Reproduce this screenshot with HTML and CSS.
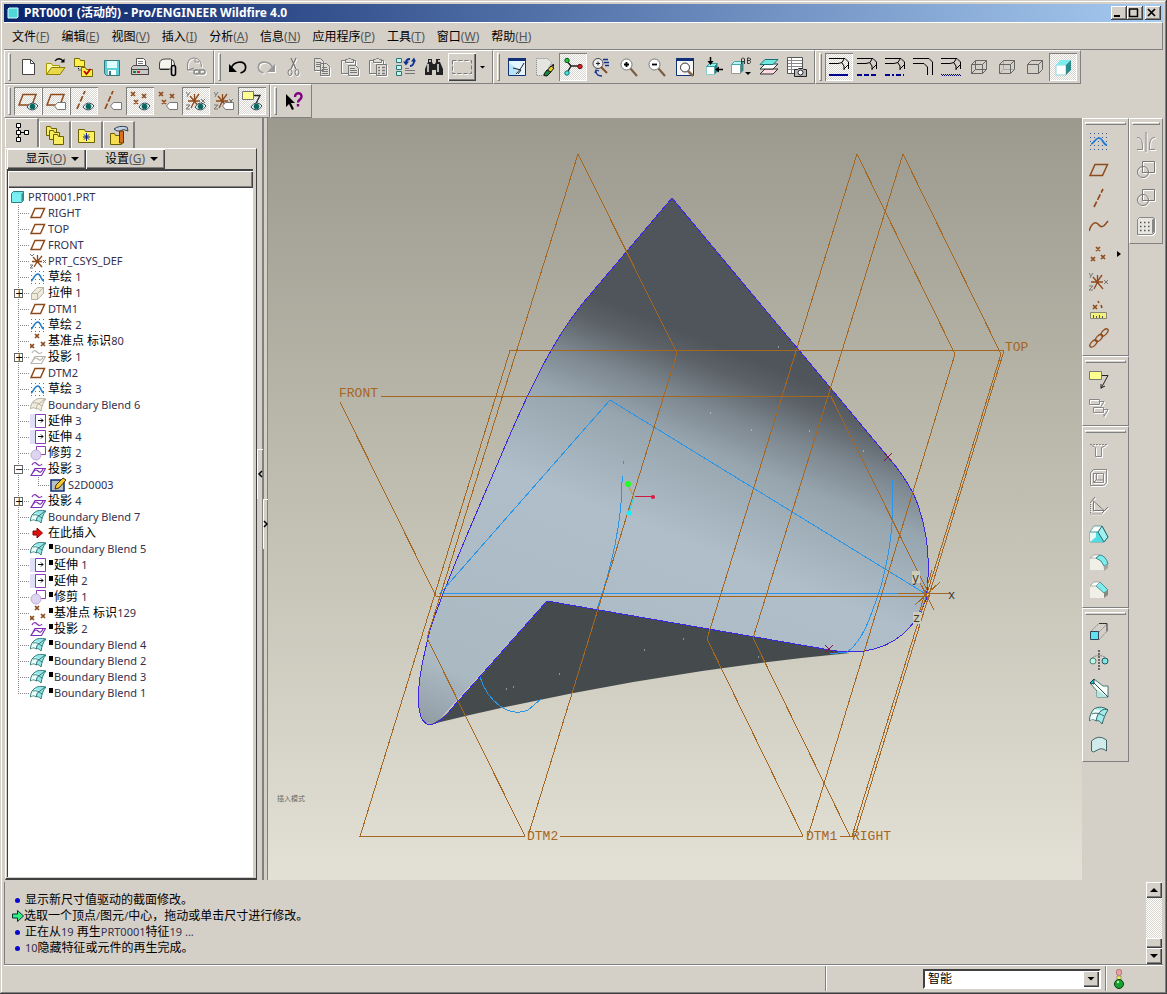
FILE: index.html
```html
<!DOCTYPE html>
<html lang="zh-CN">
<head>
<meta charset="utf-8">
<title>PRT0001 (活动的) - Pro/ENGINEER Wildfire 4.0</title>
<link rel="stylesheet" href="styles.css">
</head>
<body>
<svg class="sprite" aria-hidden="true">
  <!-- file -->
  <symbol id="new" viewBox="0 0 20 20"><path d="M4.500 2.500h8l4 4v11h-12z" fill="#fff" stroke="#444"/><path d="M12.500 2.500v4h4" fill="none" stroke="#444"/></symbol>
  <symbol id="open" viewBox="0 0 20 20"><path d="M.5 17.500v-11h5l1 2h7v3" fill="#fffaa8" stroke="#a89800"/><path d="M.5 17.500l5-7h13.500l-5 7z" fill="#e8d84a" stroke="#8c7c00"/><path d="M9 4c2-3 6-3 8 0" fill="none" stroke="#000" stroke-width="1.300"/><path d="M18.500 1.500v4h-4z"/></symbol>
  <symbol id="folders" viewBox="0 0 20 20"><path d="M.5 1.500h5l1 2h4v6h-10z" fill="#fff04a" stroke="#776b00"/><path d="M4.500 9v4h4" fill="none" stroke="#000" stroke-dasharray="1 1"/><path d="M7.500 10.500h4l1 2h6v7h-11z" fill="#fff04a" stroke="#776b00"/><path d="M10 14l2.500 3 4-5" fill="none" stroke="#c00000" stroke-width="1.800"/></symbol>
  <symbol id="save" viewBox="0 0 20 20"><path d="M2.500 3.500h15v15h-13l-2-2z" fill="#5cd0d4" stroke="#357a80"/><path d="M5 4h10v7H5z" fill="#dff"/><path d="M6 13h8v5H6z" fill="#fff"/><path d="M7 14h2v4H7z" fill="#357a80"/></symbol>
  <symbol id="print" viewBox="0 0 20 20"><path d="M6.500 10V1.500h7l2 2V10" fill="#fff" stroke="#555"/><path d="M8 4.500h5M8 6.500h5M8 8.500h5" stroke="#777"/><path d="M1.500 10.500l2-2h13l2 2v7h-17z" fill="#c8c8c8" stroke="#444"/><path d="M2 12.500h16M2 17.500h17" stroke="#444"/><path d="M3 14h3v2H3z" fill="#0a8a30"/><path d="M7 14h3v2H7z" fill="#d02020"/></symbol>
  <symbol id="mail" viewBox="0 0 20 20"><path d="M1.500 12V7q0-5 6-5h5q4 1 4 5v5z" fill="#f5f3ee" stroke="#444"/><path d="M13.500 3v6" stroke="#a02020"/><path d="M2 12.500h9" stroke="#222"/><rect x="13.500" y="8.500" width="4" height="10" rx="2" fill="#ddd" stroke="#000" stroke-width="1.600"/></symbol>
  <symbol id="link" viewBox="0 0 20 20"><path d="M11 13H1.500V8q0-7 7-7 7 1 7 9" fill="none" stroke="#888"/><path d="M9 2v3h4M2 13l6-2" fill="none" stroke="#888"/><rect x="8" y="13" width="6" height="4" rx="2" fill="none" stroke="#888" stroke-width="1.500"/><rect x="13" y="13" width="6" height="4" rx="2" fill="none" stroke="#888" stroke-width="1.500"/></symbol>
  <!-- edit -->
  <symbol id="undo" viewBox="0 0 20 20"><path d="M3 12C5 4 16 3 17.500 9c1 4-2 6-5 7" fill="none" stroke="#000" stroke-width="1.700"/><path d="M1 7v8h8z"/></symbol>
  <symbol id="redo" viewBox="0 0 20 20"><path d="M17 12C15 4 4 3 2.500 9c-1 4 2 6 5 7" fill="none" stroke="#999" stroke-width="1.700"/><path d="M19 7v8h-8z" fill="#999"/></symbol>
  <symbol id="cut" viewBox="0 0 20 20"><path d="M7 1l5 11M12 1L7 12" stroke="#777" stroke-width="1.300"/><ellipse cx="6" cy="15.500" rx="2" ry="3" fill="none" stroke="#777"/><ellipse cx="13" cy="15.500" rx="2" ry="3" fill="none" stroke="#777"/></symbol>
  <symbol id="copy" viewBox="0 0 20 20"><path d="M2.500 1.500h6l3 3v9h-9zM8.500 6.500h6l3 3v9h-9z" fill="#e0ddd6" stroke="#777"/><path d="M4 5.500h5M4 7.500h4M4 9.500h4M10 10.500h5M10 12.500h6M10 14.500h6M10 16.500h6" stroke="#777"/></symbol>
  <symbol id="paste" viewBox="0 0 20 20"><path d="M1.500 3.500h14v13h-14z" fill="none" stroke="#777"/><path d="M5.500 5.500v-3h2l1-1h2l1 1h2v3z" fill="#e0ddd6" stroke="#777"/><path d="M8.500 8.500h7l3 3v7h-10z" fill="#e0ddd6" stroke="#777"/><path d="M10 11.500h5M10 13.500h7M10 15.500h7" stroke="#777"/></symbol>
  <symbol id="pastesp" viewBox="0 0 20 20"><path d="M1.500 3.500h14v13h-14z" fill="none" stroke="#777"/><path d="M5.500 5.500v-3h2l1-1h2l1 1h2v3z" fill="#e0ddd6" stroke="#777"/><path d="M8.500 7.500h10v11h-10z" fill="#e0ddd6" stroke="#777"/><path d="M10 10.500h2M14 10.500h3M10 13.500h2M14 13.500h3M10 16.500h2M14 16.500h3" stroke="#777" stroke-width="1.500"/></symbol>
  <symbol id="regen" viewBox="0 0 20 20"><path d="M.5 1.500h5v4h-5zM.5 8.500h5v4h-5zM.5 14.500h5v4h-5z" fill="#c8f4f0" stroke="#287878"/><path d="M10 6c0-3 2-4 4-4M18 4c0 3-2 5-4 5" fill="none" stroke="#103090" stroke-width="2"/><path d="M7 4.500h6L10 8.500zM15 4.500h5l-2-4z" fill="#103090"/><path d="M9 13.500h10M9 16.500h10M9 11.500h4" stroke="#777"/></symbol>
  <symbol id="find" viewBox="0 0 20 20"><path d="M4 2h4v3l1 2h2l1-2V2h4v3l3 7v6h-7v-5H8v5H1v-6l3-7z" fill="#222"/><path d="M4 7v8M14 7v8M6 3v2M15 3v2" stroke="#e8e8e8" stroke-width="1.500"/></symbol>
  <symbol id="select" viewBox="0 0 20 20"><path d="M1.500 4.500h19v13h-19z" fill="none" stroke="#fff" stroke-dasharray="4 2"/><path d="M.5 3.500h19v13H.5z" fill="none" stroke="#777" stroke-dasharray="4 2"/></symbol>
  <!-- view -->
  <symbol id="repaint" viewBox="0 0 20 20"><path d="M1.500 1.500h17v17h-17z" fill="#e4f6ff" stroke="#103078"/><path d="M1 1h18v3H1z" fill="#103078"/><path d="M2 6l9 6-2 6H2z" fill="#b8e4fa"/><path d="M9 17c3-3 6-7 8-11M6 11l8 2-3 4" fill="none" stroke="#222"/></symbol>
  <symbol id="shadeoff" viewBox="0 0 20 20"><path d="M1.500 1.500h11l4 4-7 13h-8z" fill="#e4e4e0" stroke="#888" stroke-dasharray="1 1"/><path d="M12 14l4-5 3 2-4 5z" fill="#e8d820" stroke="#111"/><path d="M9 17l3-4 4 2-4 4-3-.5z" fill="#188838" stroke="#111"/><path d="M16 8l3-1v3z" fill="#111"/></symbol>
  <symbol id="spin" viewBox="0 0 20 20"><path d="M4 4l4 5M8 9h8M8 9l-4 7" stroke="#222" stroke-width="1.500"/><circle cx="4" cy="3.500" r="2.200" fill="#20c838" stroke="#085818"/><circle cx="17" cy="9.500" r="2.200" fill="#d82020" stroke="#601010"/><circle cx="4" cy="16" r="2.200" fill="#40e8e8" stroke="#107070"/></symbol>
  <symbol id="zoomspin" viewBox="0 0 20 20"><circle cx="7" cy="6.500" r="5" fill="#eee" stroke="#444"/><path d="M5 6.500h4M7 4.500v4" stroke="#222"/><path d="M10 10l6 6" stroke="#7a5030" stroke-width="2"/><path d="M12 2.500h5M13 5.500h5M14 8.500h4M5 14c0 4 2 5 6 5M4 16l1-3 3 1" fill="none" stroke="#103090" stroke-width="1.300"/></symbol>
  <symbol id="zoomin" viewBox="0 0 20 20"><path d="M11 11l7 8" stroke="#7a5a40" stroke-width="2"/><circle cx="7.500" cy="7.500" r="5.500" fill="#fff" stroke="#777"/><path d="M5 7.500h5M7.500 5v5" stroke="#000" stroke-width="1.800"/></symbol>
  <symbol id="zoomout" viewBox="0 0 20 20"><path d="M11 11l7 8" stroke="#7a5a40" stroke-width="2"/><circle cx="7.500" cy="7.500" r="5.500" fill="#fff" stroke="#777"/><path d="M5 7.500h5" stroke="#000" stroke-width="1.800"/></symbol>
  <symbol id="refit" viewBox="0 0 20 20"><path d="M1.500 1.500h17v17h-17z" fill="#f6f6f6" stroke="#103078"/><path d="M1 1h18v3H1z" fill="#103078"/><path d="M13 14l5 5" stroke="#8a6a50" stroke-width="2.500"/><circle cx="10" cy="10.500" r="4.500" fill="#fff" stroke="#333"/></symbol>
  <symbol id="orient" viewBox="0 0 20 20"><path d="M3.500 9.500h8v8h-8z" fill="#fff" stroke="#8cc"/><path d="M3.500 9.500l3-3h8l-3 3z" fill="#8ff0f0" stroke="#3a9a9a"/><path d="M11.500 9.500l3-3v8l-3 3z" fill="#288080"/><path d="M7.500 0v5M20 12.500h-5" stroke="#000" stroke-width="1.500"/><path d="M4.500 4h6l-3 4zM16 9.500v6l-4-3z"/></symbol>
  <symbol id="saved" viewBox="0 0 20 20"><path d="M.5 7.500h9v9h-9z" fill="#fff" stroke="#999"/><path d="M.5 7.500l3-3h9l-3 3z" fill="#baf4f4" stroke="#4aa"/><path d="M9.500 7.500l3-3v9l-3 3z" fill="#3a8a8a"/><path d="M10.500 7V2l1-1h1l1 1v5M10.500 4.500h3M16.500 1v5.500h2l1-1v-1l-1-1h-2 2l1-.5v-1l-1-1z" fill="none" stroke="#333"/><path d="M14 15h6l-3 3z"/></symbol>
  <symbol id="layers" viewBox="0 0 20 20"><path d="M1 17l5-5h13l-5 5z" fill="#ffd8e0" stroke="#333"/><path d="M1 12l5-5h13l-5 5z" fill="#fff" stroke="#333"/><path d="M1 7.500l5-5h13l-5 5z" fill="#70e8e0" stroke="#187070"/></symbol>
  <symbol id="viewmgr" viewBox="0 0 20 20"><path d="M.5 .500h15v16H.5z" fill="#fff" stroke="#555"/><path d="M1 3.500h14M1 6.500h14M1 9.500h14M1 12.500h14M4.500 1v15" stroke="#888"/><path d="M7.500 12.500h3l1-1h4l1 1h3v7h-12z" fill="#b8b8b8" stroke="#222"/><circle cx="13.500" cy="15.500" r="2.500" fill="#fff" stroke="#222"/></symbol>
  <!-- line display -->
  <symbol id="bend" viewBox="0 0 20 20"><path d="M0 1.500h16l3.500 3.500V12M0 6.500h9l4-1 2-3.500M13 6l2 3v4M15 12l4-4" fill="none" stroke="#000"/></symbol>
  <symbol id="d1" viewBox="0 0 20 20"><use href="#bend"/><path d="M0 18h19" stroke="#000090" stroke-width="2"/></symbol>
  <symbol id="d2" viewBox="0 0 20 20"><use href="#bend"/><path d="M0 18h19" stroke="#000090" stroke-width="2" stroke-dasharray="5 2"/></symbol>
  <symbol id="d3" viewBox="0 0 20 20"><use href="#bend"/><path d="M0 18h19" stroke="#000090" stroke-width="2" stroke-dasharray="5 2 2 2"/></symbol>
  <symbol id="d4" viewBox="0 0 20 20"><path d="M0 1.500h16l3.500 3.500V18M0 6.500h11l3.500 3.500V18" fill="none" stroke="#000"/></symbol>
  <symbol id="d5" viewBox="0 0 20 20"><use href="#bend"/><path d="M0 17.500h19" stroke="#000090" stroke-dasharray="1 1"/><path d="M1 18.500h19" stroke="#000090" stroke-dasharray="1 1"/></symbol>
  <symbol id="wire" viewBox="0 0 20 20"><path d="M2.500 7.500h11v9h-11zM6.500 3.500h11v9h-11zM2.500 7.500l4-4M13.500 7.500l4-4M2.500 16.500l4-4M13.500 16.500l4-4" fill="none" stroke="#666"/></symbol>
  <symbol id="hidden" viewBox="0 0 20 20"><path d="M6.500 3.500v9h11M2.500 16.500l4-4" fill="none" stroke="#aaa"/><path d="M2.500 7.500h11v9h-11zM2.500 7.500l4-4h11v9l-4 4M13.500 7.500l4-4" fill="none" stroke="#666"/></symbol>
  <symbol id="nohidden" viewBox="0 0 20 20"><path d="M2.500 7.500h11v9h-11zM2.500 7.500l4-4h11v9l-4 4M13.500 7.500l4-4" fill="none" stroke="#666"/></symbol>
  <symbol id="shade" viewBox="0 0 20 20"><path d="M3 8h10v10H3z" fill="#fff" stroke="#7cc" stroke-width=".8"/><path d="M3 8l4-5h11l-5 5z" fill="#7cecec"/><path d="M13 8l5-5v10l-5 5z" fill="#2a8c8c"/></symbol>
  <!-- datum display -->
  <symbol id="eye" viewBox="0 0 20 20"><path d="M9 16c3-5 8-5 11-1-3 5-8 5-11 1z" fill="#e8f4f0" stroke="#345"/><circle cx="14.500" cy="15.500" r="2.800" fill="#086860"/></symbol>
  <symbol id="tag" viewBox="0 0 20 20"><path d="M8.500 15l3-3.500h8v7h-8z" fill="#fff" stroke="#777"/></symbol>
  <symbol id="plane" viewBox="0 0 20 20"><path d="M1 15.500L6 4.500h12.500l-5 11z" fill="none" stroke="#8f4a1c" stroke-width="1.500"/></symbol>
  <symbol id="axis" viewBox="0 0 20 20"><path d="M5 19L14 1" stroke="#8f4a1c" stroke-width="1.700" stroke-dasharray="6 2"/></symbol>
  <symbol id="points" viewBox="0 0 20 20"><path d="M7 3l4 4M11 3L7 7M2 13l4 4M6 13l-4 4M12 11l4 4M16 11l-4 4" stroke="#8f4a1c" stroke-width="1.700"/></symbol>
  <symbol id="csys" viewBox="0 0 20 20"><path d="M2 10h12M8.500 3v7L5 17M4 5l10 12M13 3L8 10" fill="none" stroke="#8f4a1c" stroke-width="1.300"/><path d="M0 1l2 3 2-3M2 4L1 6M0 14h4l-4 4h4M15 8l4 4M19 8l-4 4" fill="none" stroke="#777"/></symbol>
  <symbol id="note" viewBox="0 0 20 20"><path d="M.5 1.500h12v8H.5z" fill="#ffff90" stroke="#777"/><path d="M13 5.500h6l-7 13M12 18v-4M12 18l4-2" fill="none" stroke="#222"/></symbol>
  <symbol id="t1" viewBox="0 0 20 20"><path d="M1 14L5 3.500h13l-4 10.500z" fill="none" stroke="#8f4a1c" stroke-width="1.500"/><use href="#eye"/></symbol>
  <symbol id="t2" viewBox="0 0 20 20"><path d="M1 14L5 3.500h13l-4 10.500z" fill="none" stroke="#8f4a1c" stroke-width="1.500"/><use href="#tag"/></symbol>
  <symbol id="t3" viewBox="0 0 20 20"><path d="M3 18L11 0" stroke="#8f4a1c" stroke-width="1.700" stroke-dasharray="6 2"/><use href="#eye"/></symbol>
  <symbol id="t4" viewBox="0 0 20 20"><path d="M3 18L11 0" stroke="#8f4a1c" stroke-width="1.700" stroke-dasharray="6 2"/><use href="#tag"/></symbol>
  <symbol id="cross3" viewBox="0 0 20 20"><path d="M1 1l4 4M5 1L1 5M12 3l4 4M16 3l-4 4M4 9l4 4M8 9l-4 4" stroke="#8f4a1c" stroke-width="1.700"/></symbol>
  <symbol id="t5" viewBox="0 0 20 20"><use href="#cross3"/><use href="#eye"/></symbol>
  <symbol id="t6" viewBox="0 0 20 20"><use href="#cross3"/><use href="#tag"/></symbol>
  <symbol id="t7" viewBox="0 0 20 20"><use href="#csys"/><use href="#eye"/></symbol>
  <symbol id="t8" viewBox="0 0 20 20"><use href="#csys"/><use href="#tag"/></symbol>
  <symbol id="t9" viewBox="0 0 20 20"><path d="M.5 .500h11v8H.5z" fill="#ffff90" stroke="#777"/><path d="M12 4.500h6l-4 8" fill="none" stroke="#222" stroke-width="1.300"/><use href="#eye"/></symbol>
  <symbol id="help" viewBox="0 0 20 20"><path d="M2 3v13l3-3 3 6 2-1-3-6h4z"/><path d="M11 6c0-5 7-5 6.500 0-.5 3-3.500 2.500-3.500 5.500M14 13v2.500" fill="none" stroke="#800080" stroke-width="2.400"/></symbol>
  <!-- feature bars -->
  <symbol id="sketch" viewBox="0 0 20 20"><path d="M1 1.500h18M1 5.500h18M1 9.500h18M1 13.500h18M1 17.500h18" stroke="#345a90" stroke-dasharray="1 3"/><path d="M2 12c3 0 4-6 8-6s4 7 8 7" fill="none" stroke="#1878d8" stroke-width="1.700"/></symbol>
  <symbol id="curve" viewBox="0 0 20 20"><path d="M0 15C3 6 7 5 10 9s6 0 9-4" fill="none" stroke="#8f4a1c" stroke-width="1.500"/></symbol>
  <symbol id="analysis" viewBox="0 0 20 20"><path d="M4 5l4 4M8 5L4 9M9 1l1 2M12 5l1 3" stroke="#8f4a1c" stroke-width="1.600"/><path d="M1.500 12.500h16v6h-16z" fill="#f4f080" stroke="#887"/><path d="M4.500 18v-3M7.500 18v-2M10.500 18v-3M13.500 18v-2" stroke="#554"/></symbol>
  <symbol id="chain" viewBox="0 0 20 20"><g fill="none" stroke="#8f4a1c" stroke-width="1.300"><ellipse cx="4.500" cy="15.500" rx="4.500" ry="2.300" transform="rotate(-45 4.500 15.500)"/><ellipse cx="10" cy="10" rx="4.500" ry="2.300" transform="rotate(-45 10 10)"/><ellipse cx="15.500" cy="4.500" rx="4.500" ry="2.300" transform="rotate(-45 15.500 4.500)"/></g></symbol>
  <symbol id="notes" viewBox="0 0 20 20"><path d="M.5 1.500h10v5H.5zM4.500 9.500h10v5h-10zM11 3.500h4l-3 5M15 11.500h4l-4 7v-3" fill="none" stroke="#888"/></symbol>
  <symbol id="hole" viewBox="0 0 20 20"><path d="M1 4.500h18" stroke="#888" stroke-dasharray="2 1"/><path d="M2.500 5.500l4 2v9h6v-9l4-2" fill="none" stroke="#888"/></symbol>
  <symbol id="shell" viewBox="0 0 20 20"><path d="M1.500 4.500l3-3h13v13l-3 3h-13zM4.500 5.500h10v9h-10zM7.500 5v7h7M4.500 14.500l3-3" fill="none" stroke="#888"/></symbol>
  <symbol id="rib" viewBox="0 0 20 20"><path d="M4.500 5v9.500H15zM1 7l5-6M13 17l6-6" fill="none" stroke="#777"/><path d="M1.500 8v10h12" fill="none" stroke="#777" stroke-dasharray="1 1"/></symbol>
  <symbol id="draft" viewBox="0 0 20 20"><path d="M1 8l4-6h8l6 11-4 5H1z" fill="#fff" stroke="#499" stroke-width=".8"/><path d="M1 8h6v7l-6 3z" fill="#e8f8f4"/><path d="M1 18l6-5V8h2l6 10z" fill="#50dce0"/><path d="M9 8l4-6 6 11-4 5z" fill="#a0f0f0" stroke="#266"/><path d="M1 8h8" stroke="#499"/></symbol>
  <symbol id="round" viewBox="0 0 20 20"><path d="M1 6h6q7 3 8 12H1z" fill="#f0f0e8"/><path d="M1 6l4-3h6L7 6z" fill="#fff" stroke="#888" stroke-width=".6"/><path d="M7 6l4-3q6 1 8 9l-4 2q-2-6-8-8z" fill="#80ecec" stroke="#288" stroke-width=".9"/><path d="M15 14l4-2v4l-4 3z" fill="#a8a49c"/></symbol>
  <symbol id="chamfer" viewBox="0 0 20 20"><path d="M1 6h6l8 7v5H1z" fill="#f0f0e8"/><path d="M7 6l4-4 8 8-4 3z" fill="#80ecec" stroke="#288" stroke-width=".8"/><path d="M1 6l4-4h6L7 6z" fill="#fff" stroke="#888" stroke-width=".6"/><path d="M15 13l4-3v5l-4 3z" fill="#8a8780"/></symbol>
  <symbol id="extrude" viewBox="0 0 20 20"><path d="M1 10l9-8.500M10 18l8-9M10 10l8-8" stroke="#888" stroke-dasharray="2 1"/><path d="M1.500 9.500h8v8h-8z" fill="#60e0f0" stroke="#345"/><path d="M10 1.500h8v8" fill="none" stroke="#333"/></symbol>
  <symbol id="revolve" viewBox="0 0 20 20"><path d="M10 0v20" stroke="#000" stroke-dasharray="2 1"/><path d="M3 8q7-5 14 0" fill="none" stroke="#777" stroke-dasharray="2 1"/><circle cx="4" cy="11" r="3" fill="#c8f4e8" stroke="#487"/><circle cx="16" cy="11" r="3" fill="#80e8e0" stroke="#256"/></symbol>
  <symbol id="sweep" viewBox="0 0 20 20"><path d="M1 5l4-4 9 7h5v11H8V13z" fill="#f8fff8" stroke="#477"/><path d="M8 19v-6l1-1 9 7z" fill="#b0e8e0"/><path d="M1 5l4-4v5z" fill="#28c8d0" stroke="#145"/><path d="M5 5l14 14" stroke="#345"/></symbol>
  <symbol id="blend" viewBox="0 0 20 20"><path d="M0 15c1-5 2-9 5-12 5-3 10-2 14 1-3 4-4 8-6 14-2-3-4-4-6-3-2-2-5-2-7 0z" fill="#a4ecec" stroke="#366"/><path d="M1 14c1-5 2-8 5-11l6 2c-3 2-4 5-5 9-2-1-4-1-6 0z" fill="#f4fffb"/><path d="M3 8c4-2 9 0 12 2M12 5c-3 2-4 5-5 10M12 5c2-2 5-2 7-1" fill="none" stroke="#366"/></symbol>
  <symbol id="style" viewBox="0 0 20 20"><path d="M2.500 7q7-7 15-1v11q-5-4-9-1l-4 2-2-1z" fill="#d0ecea" stroke="#466"/></symbol>
  <symbol id="mirror" viewBox="0 0 20 20"><path d="M10 0v20M1 5.500c5 0 5.500 4 5.500 12H1M19 5.500c-5 0-5.500 4-5.500 12H19" fill="none" stroke="#888"/></symbol>
  <symbol id="merge" viewBox="0 0 20 20"><path d="M6.500 1.500h12v11h-12z" fill="none" stroke="#777"/><circle cx="7" cy="12" r="5.500" fill="none" stroke="#777"/></symbol>
  <symbol id="pattern" viewBox="0 0 20 20"><path d="M1.500 3.500l2-2h14l1 1v14l-2 2h-15z" fill="#e8e6e0" stroke="#888"/><path d="M16 4l2-2v14l-2 2z" fill="#888"/><path d="M4 6.500h11M4 10.500h11M4 14.500h11" stroke="#555" stroke-width="1.500" stroke-dasharray="1.500 2.500"/></symbol>
  <!-- model tree -->
  <symbol id="m-part" viewBox="0 0 16 16"><path d="M1.500 4.500l2-2h10v9l-2 2h-10z" fill="#70e8e8" stroke="#2a8080"/><path d="M2 5h9v8H2z" fill="#7cf0f0"/><path d="M11.500 5l2-2v8l-2 2z" fill="#389090"/></symbol>
  <symbol id="m-plane" viewBox="0 0 16 16"><path d="M1 12.500L5 3.500h9.500l-4 9z" fill="none" stroke="#8f4a1c" stroke-width="1.500"/></symbol>
  <symbol id="m-csys" viewBox="0 0 16 16"><path d="M2 8.500h10M7.500 2v6L4 14M3 4l9 10M12 3L7 9" fill="none" stroke="#8f4a1c" stroke-width="1.300"/><path d="M0 1l2 2 2-2M0 12h3l-3 3h3M13 7l3 3M16 7l-3 3" fill="none" stroke="#777"/></symbol>
  <symbol id="m-sketch" viewBox="0 0 16 16"><path d="M1 2.500h14M1 6.500h14M1 10.500h14M1 14.500h14" stroke="#4878b8" stroke-dasharray="1 3"/><path d="M1 12c2 0 3-7 7-7 3 0 3 7 6 7" fill="none" stroke="#1878c8" stroke-width="1.500"/></symbol>
  <symbol id="m-ext" viewBox="0 0 16 16"><path d="M1.500 8.500h6v6h-6zM1.500 8.500l6-6h6v6l-6 6M7.500 8.500l6-6" fill="#eeebdc" stroke="#b8b4a0"/></symbol>
  <symbol id="m-points" viewBox="0 0 16 16"><path d="M5 1l4 4M9 1L5 5M0 11l4 4M4 11l-4 4M11 9l4 4M15 9l-4 4" stroke="#8f4a1c" stroke-width="1.700"/></symbol>
  <symbol id="m-proj" viewBox="0 0 16 16"><path d="M2 4q2-4 5-1t5 0M1 14.500l4-7h10.500l-4 7zM2 13q3-6 6-3t5-2" fill="none" stroke="currentColor" stroke-width="1.200"/></symbol>
  <symbol id="m-blend" viewBox="0 0 16 16"><path d="M0 12c1-4 2-7 4-8 3-3 7-3 12-2-3 3-4 7-5 12-2-2-3-3-5-2-2-2-4-1-6 0z" fill="#90e8e8" stroke="#377"/><path d="M1 11c1-4 2-6 4-7l5 2c-3 1-3 3-4 5-2-1-3-1-5 0z" fill="#eefffa"/><path d="M3 6c4-1 6 1 9 3M10 6c-3 1-3 3-4 6M10 6l5-4" fill="none" stroke="#377"/></symbol>
  <symbol id="m-blendoff" viewBox="0 0 16 16"><path d="M0 12c1-4 2-7 4-8 3-3 7-3 12-2-3 3-4 7-5 12-2-2-3-3-5-2-2-2-4-1-6 0zM3 6c4-1 6 1 9 3M10 6c-3 1-3 3-4 6M10 6l5-4" fill="#efecdf" stroke="#b4b09c"/></symbol>
  <symbol id="m-extend" viewBox="0 0 16 16"><path d="M0 1h6v14H0z" fill="#dfe0f8"/><path d="M5.500 1.500h10v13h-10z" fill="#fff" stroke="#8a3cc0"/><path d="M8 7.500h5M11 5.500l2 2-2 2" fill="none" stroke="#000"/></symbol>
  <symbol id="m-trim" viewBox="0 0 16 16"><path d="M6.500 1.500h9v8h-9z" fill="#fff" stroke="#8a3cc0"/><circle cx="6" cy="10" r="5" fill="#ddd4f0" stroke="#c0acd8"/></symbol>
  <symbol id="m-section" viewBox="0 0 16 16"><path d="M1 3h13v11H1z" fill="#b8c0c8" stroke="#0c2c70" stroke-width="1.500"/><path d="M5 12l1-4 7-7 3 2-7 8z" fill="#f4c830" stroke="#443000"/></symbol>
  <symbol id="m-here" viewBox="0 0 16 16"><path d="M3 6h4V3l5.500 5L7 13v-3H3z" fill="#e01010" stroke="#800"/></symbol>
</svg>

<div class="window">
  <header class="titlebar">
    <svg class="app-icon" viewBox="0 0 12 12"><path d="M1 2l1-1h9v9l-1 1H1z" fill="#50d8d8" stroke="#d8ffff"/></svg>
    <h1>PRT0001 (活动的) - Pro/ENGINEER Wildfire 4.0</h1>
    <div class="window-buttons">
      <button aria-label="最小化"><svg viewBox="0 0 12 10"><path d="M2 8h6" stroke="#000" stroke-width="2"/></svg></button>
      <button aria-label="最大化"><svg viewBox="0 0 12 10"><path d="M1.500 1v7.500h8V1M1 1h9" fill="none" stroke="#000" stroke-width="1.500"/></svg></button>
      <button class="close" aria-label="关闭"><svg viewBox="0 0 12 10"><path d="M2 1l7 7M9 1L2 8" stroke="#000" stroke-width="1.700"/></svg></button>
    </div>
  </header>

  <nav class="menubar">
    <button>文件<span>(<u>F</u>)</span></button><button>编辑<span>(<u>E</u>)</span></button><button>视图<span>(<u>V</u>)</span></button><button>插入<span>(<u>I</u>)</span></button><button>分析<span>(<u>A</u>)</span></button><button>信息<span>(<u>N</u>)</span></button><button>应用程序<span>(<u>P</u>)</span></button><button>工具<span>(<u>T</u>)</span></button><button>窗口<span>(<u>W</u>)</span></button><button>帮助<span>(<u>H</u>)</span></button>
  </nav>

  <div class="toolbars">
    <div class="bar">
      <div class="group"><i class="grip"></i>
        <button class="tool" aria-label="新建"><svg><use href="#new"/></svg></button>
        <button class="tool" aria-label="打开"><svg><use href="#open"/></svg></button>
        <button class="tool" aria-label="工作目录"><svg><use href="#folders"/></svg></button>
        <button class="tool" aria-label="保存"><svg><use href="#save"/></svg></button>
        <button class="tool" aria-label="打印"><svg><use href="#print"/></svg></button>
        <button class="tool" aria-label="发送附件"><svg><use href="#mail"/></svg></button>
        <button class="tool off" aria-label="发送链接"><svg><use href="#link"/></svg></button>
      </div>
      <div class="group"><i class="grip"></i>
        <button class="tool" aria-label="撤消"><svg><use href="#undo"/></svg></button>
        <button class="tool off" aria-label="重做"><svg><use href="#redo"/></svg></button>
        <button class="tool off" aria-label="剪切"><svg><use href="#cut"/></svg></button>
        <button class="tool off" aria-label="复制"><svg><use href="#copy"/></svg></button>
        <button class="tool off" aria-label="粘贴"><svg><use href="#paste"/></svg></button>
        <button class="tool off" aria-label="选择性粘贴"><svg><use href="#pastesp"/></svg></button>
        <button class="tool" aria-label="再生"><svg><use href="#regen"/></svg></button>
        <button class="tool" aria-label="查找"><svg><use href="#find"/></svg></button>
        <button class="tool raised" aria-label="选取框"><svg><use href="#select"/></svg></button>
        <button class="more" aria-label="更多选取"><i class="down"></i></button>
      </div>
      <div class="group"><i class="grip"></i>
        <button class="tool" aria-label="重画"><svg><use href="#repaint"/></svg></button>
        <button class="tool" aria-label="着色"><svg><use href="#shadeoff"/></svg></button>
        <button class="tool on" aria-label="旋转中心"><svg><use href="#spin"/></svg></button>
        <button class="tool" aria-label="定向模式"><svg><use href="#zoomspin"/></svg></button>
        <button class="tool" aria-label="放大"><svg><use href="#zoomin"/></svg></button>
        <button class="tool" aria-label="缩小"><svg><use href="#zoomout"/></svg></button>
        <button class="tool" aria-label="重新调整"><svg><use href="#refit"/></svg></button>
        <button class="tool" aria-label="重定向"><svg><use href="#orient"/></svg></button>
        <button class="tool" aria-label="已保存视图"><svg><use href="#saved"/></svg></button>
        <button class="tool" aria-label="层"><svg><use href="#layers"/></svg></button>
        <button class="tool" aria-label="视图管理器"><svg><use href="#viewmgr"/></svg></button>
      </div>
      <div class="group"><i class="grip"></i>
        <button class="tool on" aria-label="实线"><svg><use href="#d1"/></svg></button>
        <button class="tool" aria-label="虚线"><svg><use href="#d2"/></svg></button>
        <button class="tool" aria-label="中心线"><svg><use href="#d3"/></svg></button>
        <button class="tool" aria-label="无相切线"><svg><use href="#d4"/></svg></button>
        <button class="tool" aria-label="灰色线"><svg><use href="#d5"/></svg></button>
        <button class="tool" aria-label="线框"><svg><use href="#wire"/></svg></button>
        <button class="tool" aria-label="隐藏线"><svg><use href="#hidden"/></svg></button>
        <button class="tool" aria-label="无隐藏线"><svg><use href="#nohidden"/></svg></button>
        <button class="tool on" aria-label="着色显示"><svg><use href="#shade"/></svg></button>
      </div>
    </div>
    <div class="bar">
      <div class="group"><i class="grip"></i>
        <button class="tool on" aria-label="平面显示"><svg><use href="#t1"/></svg></button>
        <button class="tool on" aria-label="平面标签"><svg><use href="#t2"/></svg></button>
        <button class="tool on" aria-label="轴显示"><svg><use href="#t3"/></svg></button>
        <button class="tool" aria-label="轴标签"><svg><use href="#t4"/></svg></button>
        <button class="tool on" aria-label="点显示"><svg><use href="#t5"/></svg></button>
        <button class="tool" aria-label="点标签"><svg><use href="#t6"/></svg></button>
        <button class="tool on" aria-label="坐标系显示"><svg><use href="#t7"/></svg></button>
        <button class="tool" aria-label="坐标系标签"><svg><use href="#t8"/></svg></button>
        <button class="tool on" aria-label="注释显示"><svg><use href="#t9"/></svg></button>
      </div>
      <div class="group"><i class="grip"></i>
        <button class="tool" aria-label="上下文帮助"><svg><use href="#help"/></svg></button>
      </div>
    </div>
  </div>

  <main class="workspace">
    <aside class="navigator">
      <div class="tabs">
        <button class="tab current" aria-label="模型树"><svg viewBox="0 0 20 20"><path d="M4.500 .500h4v4h-4zM4.500 7.500h4v4h-4zM4.500 14.500h4v4h-4zM12.500 7.500h4v4h-4zM6.500 5v2M6.500 12v2M9 9.500h3" fill="#fff" stroke="#000"/></svg></button>
        <button class="tab" aria-label="文件夹"><svg viewBox="0 0 20 20"><g fill="#f8ec60" stroke="#6a6000"><path d="M1.500 1.500h4l1 2h5v7h-10z"/><path d="M4.500 5.500h4l1 2h5v7h-10z"/><path d="M8.500 9.500h4l1 2h5v8h-10z"/></g></svg></button>
        <button class="tab" aria-label="收藏夹"><svg viewBox="0 0 20 20"><path d="M1.500 4.500h6l1 2h9v11h-16z" fill="#fff060" stroke="#6a6000"/><path d="M9.500 8v8M6 12h7M7 9.500l5 5M12 9.500l-5 5" stroke="#102090"/></svg></button>
        <button class="tab" aria-label="连接"><svg viewBox="0 0 20 20"><path d="M1.500 8.500h4l1 2h6v9h-11z" fill="#f8dc50" stroke="#6a6000"/><path d="M5 4q5-4 13-2l1 4q-5-3-8 0H8z" fill="#c0d0e0" stroke="#345"/><path d="M10.500 6h4v12h-4z" fill="#d87020" stroke="#703000"/></svg></button>
      </div>
      <div class="nav-page">
        <div class="nav-menus">
          <button>显示<span>(<u>O</u>)</span><i class="down"></i></button>
          <button>设置<span>(<u>G</u>)</span><i class="down"></i></button>
        </div>
        <div class="tree-box">
          <div class="tree-head"></div>
          <ul class="tree">
            <li class="root"><svg><use href="#m-part"/></svg><b>PRT0001.PRT</b></li>
            <li><i class="twig"></i><svg><use href="#m-plane"/></svg><b>RIGHT</b></li>
            <li><i class="twig"></i><svg><use href="#m-plane"/></svg><b>TOP</b></li>
            <li><i class="twig"></i><svg><use href="#m-plane"/></svg><b>FRONT</b></li>
            <li><i class="twig"></i><svg><use href="#m-csys"/></svg><b>PRT_CSYS_DEF</b></li>
            <li><i class="twig"></i><svg><use href="#m-sketch"/></svg>草绘 <b>1</b></li>
            <li><i class="twig"><button class="fold" aria-label="展开">+</button></i><svg><use href="#m-ext"/></svg>拉伸 <b>1</b></li>
            <li><i class="twig"></i><svg><use href="#m-plane"/></svg><b>DTM1</b></li>
            <li><i class="twig"></i><svg><use href="#m-sketch"/></svg>草绘 <b>2</b></li>
            <li><i class="twig"></i><svg><use href="#m-points"/></svg>基准点 标识<b>80</b></li>
            <li><i class="twig"><button class="fold" aria-label="展开">+</button></i><svg class="pale"><use href="#m-proj"/></svg>投影 <b>1</b></li>
            <li><i class="twig"></i><svg><use href="#m-plane"/></svg><b>DTM2</b></li>
            <li><i class="twig"></i><svg><use href="#m-sketch"/></svg>草绘 <b>3</b></li>
            <li><i class="twig"></i><svg><use href="#m-blendoff"/></svg><b>Boundary Blend 6</b></li>
            <li><i class="twig"></i><svg><use href="#m-extend"/></svg>延伸 <b>3</b></li>
            <li><i class="twig"></i><svg><use href="#m-extend"/></svg>延伸 <b>4</b></li>
            <li><i class="twig"></i><svg><use href="#m-trim"/></svg>修剪 <b>2</b></li>
            <li><i class="twig"><button class="fold" aria-label="折叠">−</button></i><svg class="violet"><use href="#m-proj"/></svg>投影 <b>3</b></li>
            <li><i class="twig pass"></i><i class="twig last"></i><svg><use href="#m-section"/></svg><b>S2D0003</b></li>
            <li><i class="twig"><button class="fold" aria-label="展开">+</button></i><svg class="violet"><use href="#m-proj"/></svg>投影 <b>4</b></li>
            <li><i class="twig"></i><svg><use href="#m-blend"/></svg><b>Boundary Blend 7</b></li>
            <li><i class="twig"></i><svg><use href="#m-here"/></svg>在此插入</li>
            <li><i class="twig"></i><svg><use href="#m-blend"/></svg><i class="held"></i><b>Boundary Blend 5</b></li>
            <li><i class="twig"></i><svg><use href="#m-extend"/></svg><i class="held"></i>延伸 <b>1</b></li>
            <li><i class="twig"></i><svg><use href="#m-extend"/></svg><i class="held"></i>延伸 <b>2</b></li>
            <li><i class="twig"></i><svg><use href="#m-trim"/></svg><i class="held"></i>修剪 <b>1</b></li>
            <li><i class="twig"></i><svg><use href="#m-points"/></svg><i class="held"></i>基准点 标识<b>129</b></li>
            <li><i class="twig"></i><svg class="violet"><use href="#m-proj"/></svg><i class="held"></i>投影 <b>2</b></li>
            <li><i class="twig"></i><svg><use href="#m-blend"/></svg><i class="held"></i><b>Boundary Blend 4</b></li>
            <li><i class="twig"></i><svg><use href="#m-blend"/></svg><i class="held"></i><b>Boundary Blend 2</b></li>
            <li><i class="twig"></i><svg><use href="#m-blend"/></svg><i class="held"></i><b>Boundary Blend 3</b></li>
            <li><i class="twig last"></i><svg><use href="#m-blend"/></svg><i class="held"></i><b>Boundary Blend 1</b></li>
          </ul>
        </div>
      </div>
    </aside>

    <div class="splitter">
      <button class="sash left" aria-label="收起导航器"><svg viewBox="0 0 5 8"><path d="M4 1L1 4l3 3" fill="none" stroke="#000" stroke-width="1.500"/></svg></button>
      <button class="sash right" aria-label="展开浏览器"><svg viewBox="0 0 5 8"><path d="M1 1l3 3-3 3" fill="none" stroke="#000" stroke-width="1.500"/></svg></button>
    </div>

    <section class="viewport" aria-label="图形窗口">
      <svg viewBox="268 118 814 762" preserveAspectRatio="xMidYMid meet">
        <defs>
          <linearGradient id="sheet" gradientUnits="userSpaceOnUse" x1="700" y1="338" x2="528" y2="770">
            <stop offset="0" stop-color="#50555b"/><stop offset=".05" stop-color="#5b6167"/><stop offset=".13" stop-color="#7c868e"/><stop offset=".22" stop-color="#97a5af"/><stop offset=".42" stop-color="#b0bec9"/><stop offset=".86" stop-color="#abb9c3"/><stop offset="1" stop-color="#8f9ba3"/>
          </linearGradient>
        </defs>
        <path d="M672 198L583 303C556 336 532 382 500 458C478 510 446 580 430 630C420 670 417 690 419 708C422 726 430 727 440 719L547 601L830 650Q846 653 865 651C896 646 915 628 926 600C931 565 929 530 914 495Q904 475 888 457Z" fill="url(#sheet)"/>
        <path d="M547 601L830 650L850 653Q640 673 428 725Q440 722 452 708L480 677Z" fill="#454a4c"/>
        <g class="hairlines">
          <path d="M436 723Q446 717 452 708L547 601L830 650Q846 653 865 651C896 646 915 628 926 600C931 565 929 530 914 495Q904 475 888 457L672 198L583 303C556 336 532 382 500 458C478 510 446 580 430 630C420 670 417 690 419 708C421 723 427 727 436 723" stroke="#3c28e0"/>
          <path d="M440 593.500L610 400L925 593.500ZM622 475C623 520 611 570 597 609M623 461v3M892 480C896 530 885 580 873 609Q862 642 847 652L830 654M480 677Q486 696 500 706T528 710L541 699" stroke="#2896e8"/>
          <g stroke="#a5661f">
            <path d="M578 154L677 353L528 836M525 836L427 638L578 154"/>
            <path d="M857 154L955 354L808 836M803 836L707 639L857 154"/>
            <path d="M903 154L1001 354L852 836M850 836L753 638L903 154"/>
            <path d="M525 836.500H360L510 350.500H1003V354L855 836H840M560 836.500H803"/>
            <path d="M381 396.500H831L930 596M436 596.500H930M340 402L436 596"/>
            <path d="M898 593.500H950M914 571L934 610M932 570L917 620M940 582L915 605"/>
          </g>
          <path d="M884 453l8 8M892 453l-8 8M825 645l8 8M833 645l-8 8" stroke="#801050"/>
        </g>
        <path d="M634 497L628 485" stroke="#c89030"/><path d="M634 497L629 512" stroke="#20d8e0"/><path d="M635 496.500H652" stroke="#d01840"/>
        <circle cx="628" cy="484" r="3" fill="#20ff20"/><circle cx="629" cy="513" r="2.500" fill="#10f0ff"/><circle cx="653" cy="497" r="2" fill="#e01840"/>
        <path d="M778 347h1M710 413h1M751 430h1M809 431h1M863 451h1M506 689h1M513 687h1M559 674h1M644 650h1M683 639h1M758 657h1" stroke="#d8dde0"/>
        <g class="datum-text">
          <text x="339" y="397">FRONT</text><text x="1005" y="351">TOP</text><text x="527" y="840">DTM2</text><text x="806" y="840">DTM1</text><text x="852" y="840">RIGHT</text>
        </g>
        <path d="M912 571h8v12h-8zM913 612h8v12h-8z" fill="#d0ccba"/>
        <g class="axis-text"><text x="912" y="582">y</text><text x="948" y="599">x</text><text x="913" y="622">z</text></g>
        <text class="mode-text" x="277" y="801">插入模式</text>
      </svg>
    </section>

    <div class="side">
      <div class="stack"><i class="grip"></i>
        <button class="tool" aria-label="草绘"><svg><use href="#sketch"/></svg></button>
        <button class="tool" aria-label="平面"><svg><use href="#plane"/></svg></button>
        <button class="tool" aria-label="轴"><svg><use href="#axis"/></svg></button>
        <button class="tool" aria-label="曲线"><svg><use href="#curve"/></svg></button>
        <div class="pair"><button class="tool" aria-label="点"><svg><use href="#points"/></svg></button><button class="fly" aria-label="更多点"></button></div>
        <button class="tool" aria-label="坐标系"><svg><use href="#csys"/></svg></button>
        <button class="tool" aria-label="分析"><svg><use href="#analysis"/></svg></button>
        <button class="tool" aria-label="参照"><svg><use href="#chain"/></svg></button>
      </div>
      <div class="stack"><i class="grip"></i>
        <button class="tool" aria-label="注释"><svg><use href="#note"/></svg></button>
        <button class="tool off" aria-label="传播注释"><svg><use href="#notes"/></svg></button>
      </div>
      <div class="stack"><i class="grip"></i>
        <button class="tool off" aria-label="孔"><svg><use href="#hole"/></svg></button>
        <button class="tool off" aria-label="壳"><svg><use href="#shell"/></svg></button>
        <button class="tool off" aria-label="筋"><svg><use href="#rib"/></svg></button>
        <button class="tool" aria-label="拔模"><svg><use href="#draft"/></svg></button>
        <button class="tool" aria-label="倒圆角"><svg><use href="#round"/></svg></button>
        <button class="tool" aria-label="倒角"><svg><use href="#chamfer"/></svg></button>
      </div>
      <div class="stack"><i class="grip"></i>
        <button class="tool" aria-label="拉伸"><svg><use href="#extrude"/></svg></button>
        <button class="tool" aria-label="旋转"><svg><use href="#revolve"/></svg></button>
        <button class="tool" aria-label="扫描"><svg><use href="#sweep"/></svg></button>
        <button class="tool" aria-label="边界混合"><svg><use href="#blend"/></svg></button>
        <button class="tool" aria-label="造型"><svg><use href="#style"/></svg></button>
      </div>
    </div>
    <div class="side">
      <div class="stack"><i class="grip"></i>
        <button class="tool off" aria-label="镜像"><svg><use href="#mirror"/></svg></button>
        <button class="tool off" aria-label="合并"><svg><use href="#merge"/></svg></button>
        <button class="tool off" aria-label="修剪"><svg><use href="#merge"/></svg></button>
        <button class="tool off" aria-label="阵列"><svg><use href="#pattern"/></svg></button>
      </div>
    </div>
  </main>

  <section class="messages">
    <ul>
      <li><i class="bullet"></i>显示新尺寸值驱动的截面修改。</li>
      <li><svg class="prompt" viewBox="0 0 12 12"><path d="M.5 4h5V.5L11.500 6 5.500 11.500V8h-5z" fill="#30f080" stroke="#033"/></svg>选取一个顶点<b>/</b>图元<b>/</b>中心，拖动或单击尺寸进行修改。</li>
      <li><i class="bullet"></i>正在从<b>19</b> 再生<b>PRT0001</b>特征<b>19 ...</b></li>
      <li><i class="bullet"></i><b>10</b>隐藏特征或元件的再生完成。</li>
    </ul>
    <div class="scrollbar">
      <button aria-label="向上滚动"><i class="up"></i></button>
      <div class="track"><div class="thumb"></div></div>
      <button aria-label="向下滚动"><i class="down wide"></i></button>
    </div>
  </section>

  <footer class="status">
    <div class="status-main"></div>
    <div class="status-filter">
      <div class="combo">
        <select aria-label="选取过滤器"><option>智能</option></select>
        <span class="combo-arrow"><i class="down wide"></i></span>
      </div>
    </div>
    <div class="status-light"><svg viewBox="0 0 12 22"><rect x="3.500" y="1.500" width="5" height="6" rx="2" fill="#e8a0a0" stroke="#b07070"/><path d="M4 8h4v4H4z" fill="#f8f040" stroke="#998"/><circle cx="6" cy="16" r="4.500" fill="#18a030" stroke="#064010"/><circle cx="5" cy="14" r="1.200" fill="#b0ffb0"/></svg></div>
  </footer>
</div>
</body>
</html>
```

FILE: styles.css
```css
* { box-sizing: border-box; }

:root {
  --face: #d4d0c8;
  --light: #fff;
  --shade: #808080;
  --dark: #404040;
  --weave: repeating-conic-gradient(#fff 0 25%, #d8d5ce 0 50%) 0 0 / 2px 2px;
}

html, body { margin: 0; height: 100%; }

body {
  background: var(--face);
  color: #000;
  font: 12px/16px "Noto Sans", "Noto Sans CJK SC", sans-serif;
}

button {
  margin: 0;
  padding: 0;
  border: 0;
  background: none;
  color: inherit;
  font: inherit;
}

ul { margin: 0; padding: 0; list-style: none; }
svg { display: block; flex: none; }
i { display: block; flex: none; font-style: normal; }
.sprite { position: absolute; width: 0; height: 0; }

.window {
  display: grid;
  grid-template-rows: auto auto auto 1fr auto auto;
  min-height: 100vh;
  padding: 4px 4px 3px;
  background: var(--face);
  box-shadow: inset -1px -1px var(--dark), inset 1px 1px var(--face), inset -2px -2px var(--shade), inset 2px 2px var(--light);
}

/* title bar */
.titlebar {
  display: flex;
  align-items: center;
  height: 18px;
  padding: 0 2px 0 3px;
  background: linear-gradient(90deg, #0a246a, #a6caf0);
}
.app-icon { width: 12px; height: 12px; }
.titlebar h1 {
  flex: 1;
  margin: 0 0 0 5px;
  color: #fff;
  font-size: 12px;
  font-weight: 700;
  line-height: 18px;
  white-space: nowrap;
}
.window-buttons { display: flex; }
.window-buttons button {
  width: 16px;
  height: 14px;
  padding: 1px;
  background: var(--face);
  box-shadow: inset -1px -1px var(--dark), inset 1px 1px var(--light), inset -2px -2px var(--shade);
}
.window-buttons .close { margin-left: 2px; }
.window-buttons svg { width: 12px; height: 10px; }

/* menu */
.menubar {
  display: flex;
  gap: 12px;
  align-items: center;
  height: 28px;
  padding: 2px 8px 0;
  border-top: 1px solid var(--light);
  border-right: 1px solid var(--shade);
  border-bottom: 1px solid var(--shade);
}
.menubar button { white-space: nowrap; }
.menubar span, .nav-menus span { color: #555; }

/* tool bars */
.bar { display: flex; height: 34px; }
.group {
  display: flex;
  align-items: center;
  padding-right: 3px;
  border-top: 1px solid var(--light);
  border-right: 1px solid var(--shade);
  border-bottom: 1px solid var(--shade);
  border-left: 1px solid var(--light);
}
.grip {
  width: 3px;
  height: 28px;
  margin: 0 3px;
  border: 1px solid;
  border-color: var(--light) var(--shade) var(--shade) var(--light);
}
.tool {
  display: grid;
  flex: none;
  place-items: center;
  width: 28px;
  height: 28px;
}
.tool svg { width: 20px; height: 20px; }
.tool.on {
  background: var(--weave);
  box-shadow: inset 1px 1px var(--shade), inset -1px -1px var(--light);
}
.tool.raised { box-shadow: inset 1px 1px var(--light), inset -1px -1px var(--dark), inset -2px -2px var(--shade); }
.tool.off svg { filter: drop-shadow(1px 1px 0 #fff); }
.more { display: grid; place-items: center; width: 13px; height: 28px; }
.down { width: 6px; height: 3px; background: #000; clip-path: polygon(0 0, 100% 0, 50% 100%); }
.down.wide { width: 8px; height: 4px; }
.up { width: 8px; height: 4px; background: #000; clip-path: polygon(0 100%, 100% 100%, 50% 0); }

/* work area */
.workspace {
  display: grid;
  grid-template-columns: 253px 11px 1fr 47px 34px;
}

.navigator { display: flex; flex-direction: column; padding-left: 1px; }
.tabs { display: flex; align-items: flex-end; height: 30px; }
.tab {
  display: grid;
  place-items: center;
  width: 32px;
  height: 27px;
  border-top: 1px solid var(--light);
  border-right: 2px solid var(--shade);
  border-left: 1px solid var(--light);
}
.tab.current { width: 34px; height: 29px; align-self: flex-start; }
.tab svg { width: 20px; height: 20px; }
.nav-page {
  display: flex;
  flex: 1;
  flex-direction: column;
  padding: 0 3px 1px 1px;
  border-top: 1px solid var(--light);
  border-right: 1px solid var(--dark);
  border-bottom: 2px solid var(--dark);
  border-left: 1px solid var(--light);
}
.nav-menus { display: flex; }
.nav-menus button {
  display: flex;
  align-items: center;
  justify-content: flex-end;
  width: 79px;
  height: 20px;
  padding-right: 7px;
  box-shadow: inset 1px 1px var(--light), inset -1px -1px var(--dark), inset -2px -2px var(--shade);
  white-space: nowrap;
}
.nav-menus .down { width: 8px; height: 4px; margin-left: 5px; }
.tree-box {
  flex: 1;
  border-top: 2px solid var(--dark);
  border-left: 1px solid var(--dark);
  background: #fff;
}
.tree-head {
  height: 17px;
  background: var(--face);
  box-shadow: inset 1px 1px var(--light), inset -1px -1px var(--dark), inset -2px -2px var(--shade);
}
.tree { padding: 1px 2px; }
.tree li {
  display: flex;
  align-items: center;
  height: 16px;
  line-height: 16px;
  white-space: pre;
}
.tree svg { width: 16px; height: 16px; margin-right: 2px; }
.tree b, .messages b { color: #343050; font-size: 11px; font-weight: 400; }
.twig {
  width: 20px;
  height: 16px;
  padding: 4px 0 0 4px;
  background:
    repeating-linear-gradient(180deg, #888 0 1px, transparent 1px 2px) 8px 0 / 1px 100% no-repeat,
    repeating-linear-gradient(90deg, #888 0 1px, transparent 1px 2px) 8px 8px / 12px 1px no-repeat;
}
.twig.last { background-size: 1px 8px, 12px 1px; }
.twig.pass { background-size: 1px 100%, 0 0; }
.fold {
  display: block;
  width: 9px;
  height: 9px;
  border: 1px solid #666;
  background: #fff;
  font: 10px/7px "DejaVu Sans", sans-serif;
}
.held { width: 4px; height: 5px; margin: 0 1px 5px 1px; background: #000; }
.pale { color: #b8b4ac; }
.violet { color: #8030b8; }

.splitter {
  display: grid;
  grid-template-rows: 1fr 50px 50px 1fr;
  grid-template-columns: 6px 5px;
  background: linear-gradient(90deg, var(--face) 5px, var(--shade) 5px 7px, var(--face) 7px 10px, var(--shade) 10px);
}
.sash {
  display: grid;
  place-items: center;
  background: var(--face);
  box-shadow: inset 1px 1px var(--light), inset -1px 0 var(--shade);
}
.sash.left { grid-area: 2 / 1; }
.sash.right { grid-area: 3 / 2; }
.sash svg { width: 5px; height: 8px; }

.viewport {
  min-height: 0;
  overflow: hidden;
  background: linear-gradient(180deg, #9c9a8e, #bdbbae 45%, #e3e1d5);
}
.viewport > svg { width: 100%; height: 100%; }
.hairlines { fill: none; stroke-width: 1px; shape-rendering: crispEdges; }
.datum-text { fill: #a5661f; font: 13px "Liberation Mono", monospace; }
.axis-text { fill: #403830; font: 12px "Liberation Mono", monospace; }
.mode-text { fill: #6c6a60; font: 7px "Noto Sans CJK SC", sans-serif; }

.side .stack {
  display: flex;
  flex-direction: column;
  padding: 0 2px 3px;
  border: 1px solid;
  border-color: var(--light) var(--shade) var(--shade) var(--light);
}
.stack .grip { width: auto; height: 3px; margin: 3px 0; }
.pair { display: flex; align-items: center; }
.fly { width: 4px; height: 6px; margin-left: 4px; background: #000; clip-path: polygon(0 0, 100% 50%, 0 100%); }

/* message log */
.messages {
  display: flex;
  justify-content: space-between;
  height: 85px;
  padding: 2px 1px 0 0;
  border-bottom: 1px solid var(--shade);
}
.messages ul {
  flex: 1;
  padding: 10px 0 0 7px;
  border-left: 1px solid var(--shade);
}
.messages li { display: flex; align-items: center; height: 16px; white-space: pre; }
.bullet { width: 5px; height: 5px; margin: 0 5px 0 3px; border-radius: 50%; background: #0808d0; }
.prompt { width: 12px; height: 12px; }
.scrollbar { display: flex; flex-direction: column; width: 16px; }
.scrollbar button, .thumb, .combo-arrow {
  display: grid;
  place-items: center;
  background: var(--face);
  box-shadow: inset 1px 1px var(--light), inset -1px -1px var(--dark), inset -2px -2px var(--shade);
}
.scrollbar button { height: 16px; }
.track { display: flex; flex: 1; flex-direction: column; justify-content: flex-end; background: var(--weave); }
.thumb { height: 10px; }

/* status line */
.status {
  display: grid;
  grid-template-columns: 1fr 280px 57px;
  height: 26px;
  border-top: 1px solid var(--light);
}
.status-main, .status-filter { border-right: 1px solid var(--shade); }
.status-filter, .status-light { border-left: 1px solid var(--light); }
.status-filter { display: flex; justify-content: flex-end; align-items: center; padding-right: 4px; }
.combo { display: grid; width: 178px; height: 20px; }
.combo select {
  grid-area: 1 / 1;
  appearance: none;
  width: 100%;
  height: 20px;
  padding: 0 3px;
  border: 2px solid;
  border-color: var(--dark) var(--light) var(--light) var(--dark);
  border-radius: 0;
  background: #fff;
  color: #000;
  font: inherit;
}
.combo-arrow { grid-area: 1 / 1; justify-self: end; width: 16px; height: 16px; margin: 2px; pointer-events: none; }
.status-light { display: flex; align-items: center; padding-left: 6px; }
.status-light svg { width: 12px; height: 22px; }
```
